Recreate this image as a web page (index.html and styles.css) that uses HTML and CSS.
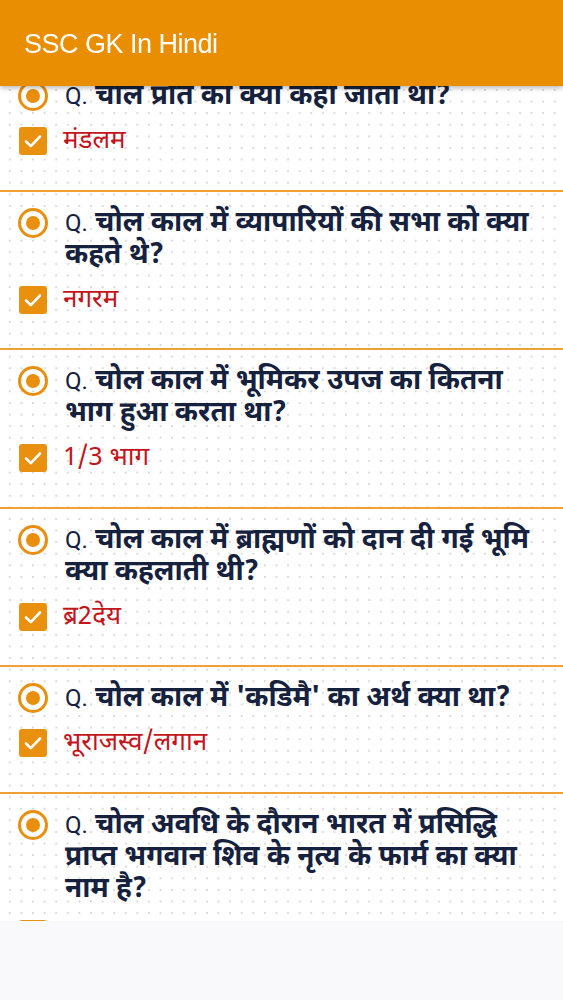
FILE: index.html
```html
<!DOCTYPE html>
<html lang="hi">
<head>
<meta charset="utf-8">
<title>SSC GK In Hindi</title>
<link rel="stylesheet" href="styles.css">
</head>
<body>
<header class="appbar"><span class="appbar-title">SSC GK In Hindi</span></header>

<main class="list">
  <section class="card">
    <div class="q-row">
      <span class="radio"><span class="radio-dot"></span></span>
      <p class="q-text"><span class="q-label">Q.</span> चोल प्रांत को क्या कहा जाता था?</p>
    </div>
    <div class="a-row">
      <span class="check"><svg viewBox="0 0 28 28" width="28" height="28"><path d="M7 14.5l4.8 4.6L21 9.5" fill="none" stroke="#fff" stroke-width="2.6" stroke-linecap="round" stroke-linejoin="round"/></svg></span>
      <p class="a-text">मंडलम</p>
    </div>
  </section>

  <section class="card">
    <div class="q-row">
      <span class="radio"><span class="radio-dot"></span></span>
      <p class="q-text"><span class="q-label">Q.</span> चोल काल में व्यापारियों की सभा को क्या कहते थे?</p>
    </div>
    <div class="a-row">
      <span class="check"><svg viewBox="0 0 28 28" width="28" height="28"><path d="M7 14.5l4.8 4.6L21 9.5" fill="none" stroke="#fff" stroke-width="2.6" stroke-linecap="round" stroke-linejoin="round"/></svg></span>
      <p class="a-text">नगरम</p>
    </div>
  </section>

  <section class="card">
    <div class="q-row">
      <span class="radio"><span class="radio-dot"></span></span>
      <p class="q-text"><span class="q-label">Q.</span> चोल काल में भूमिकर उपज का कितना भाग हुआ करता था?</p>
    </div>
    <div class="a-row">
      <span class="check"><svg viewBox="0 0 28 28" width="28" height="28"><path d="M7 14.5l4.8 4.6L21 9.5" fill="none" stroke="#fff" stroke-width="2.6" stroke-linecap="round" stroke-linejoin="round"/></svg></span>
      <p class="a-text">1/3 भाग</p>
    </div>
  </section>

  <section class="card">
    <div class="q-row">
      <span class="radio"><span class="radio-dot"></span></span>
      <p class="q-text"><span class="q-label">Q.</span> चोल काल में ब्राह्मणों को दान दी गई भूमि क्या कहलाती थी?</p>
    </div>
    <div class="a-row">
      <span class="check"><svg viewBox="0 0 28 28" width="28" height="28"><path d="M7 14.5l4.8 4.6L21 9.5" fill="none" stroke="#fff" stroke-width="2.6" stroke-linecap="round" stroke-linejoin="round"/></svg></span>
      <p class="a-text">ब्र2देय</p>
    </div>
  </section>

  <section class="card">
    <div class="q-row">
      <span class="radio"><span class="radio-dot"></span></span>
      <p class="q-text"><span class="q-label">Q.</span> चोल काल में 'कडिमै' का अर्थ क्या था?</p>
    </div>
    <div class="a-row">
      <span class="check"><svg viewBox="0 0 28 28" width="28" height="28"><path d="M7 14.5l4.8 4.6L21 9.5" fill="none" stroke="#fff" stroke-width="2.6" stroke-linecap="round" stroke-linejoin="round"/></svg></span>
      <p class="a-text">भूराजस्व/लगान</p>
    </div>
  </section>

  <section class="card">
    <div class="q-row">
      <span class="radio"><span class="radio-dot"></span></span>
      <p class="q-text"><span class="q-label">Q.</span> चोल अवधि के दौरान भारत में प्रसिद्धि प्राप्त भगवान शिव के नृत्य के फार्म का क्या नाम है?</p>
    </div>
    <div class="a-row">
      <span class="check"><svg viewBox="0 0 28 28" width="28" height="28"><path d="M7 14.5l4.8 4.6L21 9.5" fill="none" stroke="#fff" stroke-width="2.6" stroke-linecap="round" stroke-linejoin="round"/></svg></span>
      <p class="a-text">नटराज</p>
    </div>
  </section>
</main>

<div class="ad-slot"></div>
</body>
</html>
```

FILE: styles.css
```css
* { box-sizing: border-box; }

html, body {
  margin: 0;
  padding: 0;
  height: 1000px;
  overflow: hidden;
}

body {
  background-color: #ffffff;
  background-image: radial-gradient(circle, #d9d9de 0.9px, transparent 1.3px);
  background-size: 11.6px 11.6px;
  background-position: 4px 3px;
  font-family: "Noto Sans Devanagari", "Noto Sans", "Liberation Sans", sans-serif;
}

.appbar {
  position: fixed;
  top: 0;
  left: 0;
  right: 0;
  height: 86px;
  background: #e98e00;
  display: flex;
  align-items: center;
  padding: 3px 0 0 24px;
  box-shadow: 0 2px 5px rgba(0, 0, 0, 0.28);
  z-index: 10;
}

.appbar-title {
  color: #ffffff;
  font-family: "Liberation Sans", sans-serif;
  font-size: 27px;
  letter-spacing: -0.5px;
}

.list {
  margin-top: 63px;
}

.card {
  border-top: 2px solid #efa133;
  padding: 15px 20px 30.5px 18px;
  display: flex;
  flex-direction: column;
  gap: 13px;
}

.card:first-child {
  border-top-color: transparent;
}

.q-row, .a-row {
  display: flex;
  align-items: flex-start;
  gap: 17px;
}

.radio {
  flex: none;
  width: 30px;
  height: 30px;
  margin-top: 1px;
  border: 3px solid #e98f0d;
  border-radius: 50%;
  display: flex;
  align-items: center;
  justify-content: center;
}

.radio-dot {
  width: 14px;
  height: 14px;
  border-radius: 50%;
  background: #e98f0d;
}

.q-text {
  margin: 0;
  color: #16213e;
  font-size: 28px;
  font-weight: 700;
  line-height: 32px;
}

.q-label {
  font-family: "Roboto", "Liberation Sans", sans-serif;
  font-weight: 400;
  font-size: 24px;
}

.check {
  flex: none;
  width: 28px;
  height: 28px;
  margin-top: 1px;
  margin-left: 1px;
  margin-right: -1px;
  border-radius: 3px;
  background: #e9900f;
  display: flex;
}

.a-text {
  margin: 0;
  color: #c4141c;
  font-size: 26px;
  font-weight: 400;
  line-height: 33px;
}

.ad-slot {
  position: fixed;
  left: 0;
  right: 0;
  bottom: 0;
  height: 79px;
  background: #f9f9fb;
  z-index: 5;
}
```
